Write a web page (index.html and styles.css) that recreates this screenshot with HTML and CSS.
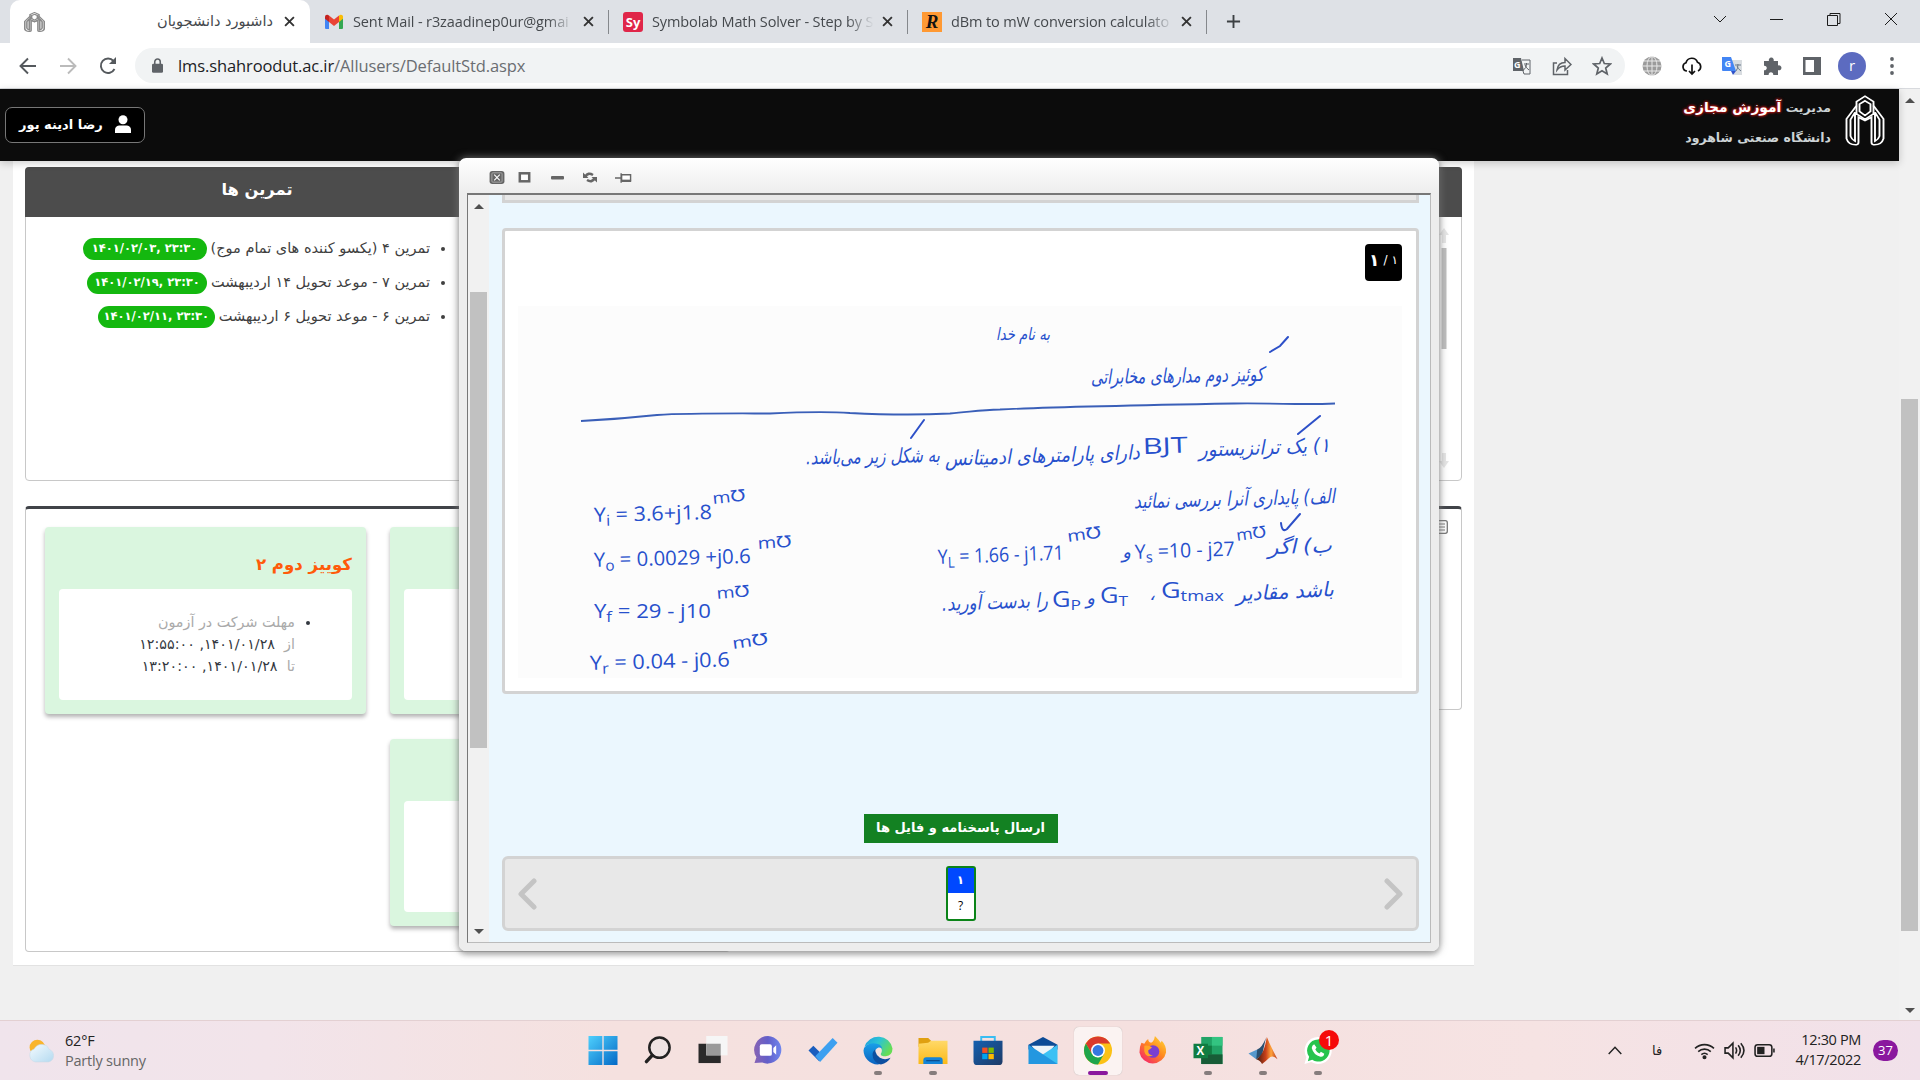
FILE: index.html
```html
<!DOCTYPE html>
<html lang="fa">
<head>
<meta charset="utf-8">
<title>داشبورد دانشجویان</title>
<link rel="stylesheet" href="styles.css">
</head>
<body>
<svg width="0" height="0" class="defs">
  <defs>
    <linearGradient id="gWin" x1="0" y1="0" x2="1" y2="1"><stop offset="0" stop-color="#4fd0fd"/><stop offset="1" stop-color="#0269c6"/></linearGradient>
    <linearGradient id="gEdge" x1="0" y1="0" x2="1" y2="0.5"><stop offset="0" stop-color="#1c9be0"/><stop offset=".5" stop-color="#2cc3d5"/><stop offset="1" stop-color="#66dd55"/></linearGradient>
    <linearGradient id="gEdge2" x1="0" y1="0" x2="0" y2="1"><stop offset="0" stop-color="#1a9fe8"/><stop offset="1" stop-color="#0b62c0"/></linearGradient>
    <linearGradient id="gChat" x1="0" y1="0" x2="1" y2="0"><stop offset="0" stop-color="#8763b4"/><stop offset=".5" stop-color="#635fc9"/><stop offset="1" stop-color="#6f86ee"/></linearGradient>
    <linearGradient id="gFold" x1="0" y1="0" x2="0" y2="1"><stop offset="0" stop-color="#ffd968"/><stop offset="1" stop-color="#fbb917"/></linearGradient>
    <linearGradient id="gStore" x1="0" y1="0" x2="1" y2="1"><stop offset="0" stop-color="#1560b0"/><stop offset="1" stop-color="#1d3a66"/></linearGradient>
    <linearGradient id="gFox" x1="1" y1="0" x2=".2" y2="1"><stop offset="0" stop-color="#ffe03a"/><stop offset=".5" stop-color="#ff8a1e"/><stop offset="1" stop-color="#f5246a"/></linearGradient>
    <linearGradient id="gMat" x1="0" y1="0" x2="1" y2="0"><stop offset="0" stop-color="#3c1a10"/><stop offset=".45" stop-color="#c9401a"/><stop offset=".7" stop-color="#ffa33b"/><stop offset="1" stop-color="#b5301b"/></linearGradient>
    <linearGradient id="gCloud" x1="0" y1="0" x2="1" y2="1"><stop offset="0" stop-color="#f4fbff"/><stop offset="1" stop-color="#b4daf0"/></linearGradient>
    <symbol id="uni" viewBox="0 0 40 62">
      <path d="M11.500 13V8L20 1.500 28.500 8v5L38.500 29v24q-2 8-10 7.500-2-.5-2-3V27L20 31l-6.500-4v30.500q0 2.500-2 3Q3.500 61 1.500 53V29z"/>
      <path d="M20 7l5.500 4v9L20 25l-5.500-5v-9zM11.500 13v10L20 29.500l8.500-6.500V13M10 21 5.500 30v20q1 4 4.500 6zM30 21l4.500 9v20q-1 4-4.500 6z"/>
    </symbol>
    <symbol id="cross" viewBox="0 0 10 10"><path d="M1 1 9 9M9 1 1 9"/></symbol>
  </defs>
</svg>
<div class="screen">
  <div class="tabs">
    <div class="tab active">
      <svg class="fav-uni" viewBox="0 0 40 62" preserveAspectRatio="none"><use href="#uni"/></svg>
      <span class="tab-title rtl" dir="rtl">داشبورد دانشجویان</span>
      <svg class="x"><use href="#cross"/></svg>
    </div>
    <div class="tab t2">
      <svg class="fav" viewBox="0 0 20 20"><path fill="#4285f4" d="M1 4v12q0 1 1 1h3V8z"/><path fill="#34a853" d="M19 4v12q0 1-1 1h-3V8z"/><path fill="#ea4335" d="M5 3.500l5 4 5-4V10l-5 4-5-4z"/><path fill="#c5221f" d="M1 5q0-2.500 2.500-2.200L5 3.500V10L1 6.800z"/><path fill="#fbbc04" d="M19 5q0-2.500-2.500-2.200L15 3.500V10l4-3.200z"/></svg>
      <span class="tab-title">Sent Mail - r3zaadinep0ur@gmai</span>
      <svg class="x"><use href="#cross"/></svg>
    </div>
    <div class="tab t3">
      <span class="fav sy">Sy</span>
      <span class="tab-title">Symbolab Math Solver - Step by S</span>
      <svg class="x"><use href="#cross"/></svg>
    </div>
    <div class="tab t4">
      <span class="fav rr">R</span>
      <span class="tab-title">dBm to mW conversion calculato</span>
      <svg class="x"><use href="#cross"/></svg>
    </div>
    <svg class="plus" viewBox="0 0 16 16"><path d="M8 1v14M1 8h14"/></svg>
    <div class="winbtns">
      <svg viewBox="0 0 14 14"><path d="M1 4l6 6 6-6"/></svg>
      <svg viewBox="0 0 14 14"><path d="M0 7.500h13"/></svg>
      <svg viewBox="0 0 14 14"><path d="M.5 3.500h10v10H.5zM3 3.500v-2h10v10h-2"/></svg>
      <svg viewBox="0 0 14 14"><path d="M1 1l12 12M13 1 1 13"/></svg>
    </div>
  </div>
  <div class="toolbar">
    <svg class="nav" viewBox="0 0 20 20"><path d="M18 10H3M10 2.500 2.500 10l7.500 7.500"/></svg>
    <svg class="nav dim" viewBox="0 0 20 20"><path d="M2 10h15M10 2.500l7.500 7.500-7.500 7.500"/></svg>
    <svg class="nav" viewBox="0 0 20 20"><path d="M16.500 13A7.200 7.200 0 1 1 15.500 5"/><path class="solid" d="M18 1v7h-7z"/></svg>
    <div class="omni">
      <svg class="lock" viewBox="0 0 12 16"><path fill="#5f6368" d="M1.500 6h9Q12 6 12 7.500v7Q12 16 10.500 16h-9Q0 16 0 14.500v-7Q0 6 1.500 6z"/><path fill="none" stroke="#5f6368" stroke-width="1.700" d="M3 6.500V4a3 3 0 0 1 6 0v2.500"/></svg>
      <span class="url">lms.shahroodut.ac.ir<i>/Allusers/DefaultStd.aspx</i></span>
      <div class="omni-icons">
        <svg viewBox="0 0 20 20"><path fill="#5f6368" d="M1 2h8l3 13H1z"/><path fill="none" stroke="#5f6368" d="M10 4h8v14h-6l-1-3M12 8h5M14.500 7v1q0 4-3 6M13 9q1 3 4 5"/><text x="2" y="12" font-size="9" font-weight="700" fill="#fff">G</text></svg>
        <svg viewBox="0 0 20 20"><path fill="none" stroke="#5f6368" stroke-width="1.500" d="M5 7H1.500v11.500h14V14M5 14q1-7.500 8-7.500V2.500l6 6-6 5.500v-4q-5 0-8 4z"/></svg>
        <svg viewBox="0 0 20 20"><path fill="none" stroke="#5f6368" stroke-width="1.700" d="M10 2l2.300 5.500 6 .5-4.600 4 1.500 6L10 14.800 4.800 18l1.500-6L1.700 8l6-.5z"/></svg>
      </div>
    </div>
    <div class="exts">
      <svg viewBox="0 0 20 20"><circle cx="10" cy="10" r="9.500" fill="#9b9b9b"/><path fill="none" stroke="#e8e8e8" d="M10 0v20M0 10h20M2 5h16M2 15h16"/><ellipse cx="10" cy="10" rx="5" ry="9.500" fill="none" stroke="#e8e8e8"/></svg>
      <svg viewBox="0 0 20 20"><path fill="none" stroke="#111" stroke-width="1.700" d="M5 15a4.200 4.200 0 0 1-1-8.200 6 6 0 0 1 11.500-.5A4.700 4.700 0 0 1 16 15M10 8.500V18M7 15l3 3 3-3"/></svg>
      <svg viewBox="0 0 20 20"><path fill="#d8dce0" d="M8 4h12v15h-8z"/><path fill="#4285f4" d="M0 1h9l5 14H1q-1 0-1-1z"/><path fill="#3052c8" d="M9 15h5l-3 4z"/><path stroke="#6b7a8c" fill="none" d="M13 9h6M16 8q0 5-2 7M15 10q1 3 4 5"/><text x="2.500" y="11" font-size="9" font-weight="700" fill="#fff">G</text></svg>
      <svg viewBox="0 0 20 20"><path fill="#5f6368" d="M2 5h5a2.500 2.500 0 1 1 4.600 0H16v4.500a2.500 2.500 0 1 1 0 4.600V19h-4.800a2.300 2.300 0 1 0-4.500 0H2v-4.800a2.300 2.300 0 1 0 0-4.500z"/></svg>
      <svg viewBox="0 0 20 20"><path fill="#5f6368" fill-rule="evenodd" d="M1 1h18v18H1zM3.500 4v12H12V4z"/></svg>
      <span class="avatar">r</span>
      <svg viewBox="0 0 20 20"><g fill="#5f6368"><circle cx="10" cy="3" r="1.900"/><circle cx="10" cy="10" r="1.900"/><circle cx="10" cy="17" r="1.900"/></g></svg>
    </div>
  </div>
  <div class="view">
    <div class="page">
      <div class="header">
        <div class="user"><span dir="rtl">رضا ادینه پور</span>
          <svg viewBox="0 0 16 18"><circle cx="8" cy="4.800" r="4.500"/><path d="M0 18v-3q0-4 4-4.500h8q4 .5 4 4.500v3z"/></svg></div>
        <div class="brand">
          <div class="brand-text" dir="rtl"><div>مدیریت <b>آموزش مجازی</b></div><div>دانشگاه صنعتی شاهرود</div></div>
          <svg class="logo" viewBox="0 0 40 62" preserveAspectRatio="none"><use href="#uni"/></svg>
        </div>
      </div>
      <div class="main">
        <div class="row top">
          <div class="panel tasks">
            <div class="panel-head" dir="rtl">تمرین ها</div>
            <ul dir="rtl">
              <li><span>تمرین ۴ (یکسو کننده های تمام موج)</span><bdi class="pill p1" dir="ltr">۱۴۰۱/۰۲/۰۳, ۲۳:۳۰</bdi></li>
              <li><span>تمرین ۷ - موعد تحویل ۱۴ اردیبهشت</span><bdi class="pill p2" dir="ltr">۱۴۰۱/۰۲/۱۹, ۲۳:۳۰</bdi></li>
              <li><span>تمرین ۶ - موعد تحویل ۶ اردیبهشت</span><bdi class="pill p3" dir="ltr">۱۴۰۱/۰۲/۱۱, ۲۳:۳۰</bdi></li>
            </ul>
          </div>
          <div class="panel side">
            <div class="panel-head"></div>
            <svg class="track" viewBox="0 0 10 240"><path fill="#e6e6e6" d="M5 0l5 7H7v8H3V7H0zM5 240l5-7H7v-8H3v8H0z"/><rect x="2.500" y="20" width="5" height="101" fill="#bdbdbd"/></svg>
          </div>
        </div>
        <div class="row bottom">
          <div class="panel quizzes">
            <div class="quiz">
              <h3 dir="rtl">کوییز دوم ۲</h3>
              <div class="info" dir="rtl"><ul><li><span>مهلت شرکت در آزمون</span><br><span>از</span>&nbsp; ۱۴۰۱/۰۱/۲۸, ۱۲:۵۵:۰۰<br><span>تا</span>&nbsp; ۱۴۰۱/۰۱/۲۸, ۱۳:۲۰:۰۰</li></ul></div>
            </div>
            <div class="quiz"><h3></h3><div class="info"></div></div>
            <div class="quiz third"><h3></h3><div class="info"></div></div>
          </div>
          <div class="panel notes">
            <svg viewBox="0 0 14 14"><rect x=".7" y=".7" width="12.600" height="12.600" rx="2" fill="none" stroke="#777" stroke-width="1.300"/><path stroke="#777" d="M3 4h8M3 7h8M3 10h8"/></svg>
          </div>
        </div>
      </div>
    </div>
    <div class="vscroll"><i class="up"></i><i class="thumb"></i><i class="down"></i></div>
  </div>
  <div class="taskbar">
    <div class="weather">
      <svg viewBox="0 0 28 28"><circle cx="10" cy="11" r="7.500" fill="#f9b52c"/><path fill="url(#gCloud)" stroke="#c9dce8" stroke-width=".6" d="M8 25a6.500 6.500 0 0 1-1-12.500A8 8 0 0 1 21.500 13 6.300 6.300 0 0 1 21 25z"/></svg>
      <div><p class="temp">62°F</p><p class="sky">Partly sunny</p></div>
    </div>
    <div class="apps">
      <span><svg viewBox="0 0 30 30"><path fill="url(#gWin)" d="M0 0h14.300v14.300H0zM15.700 0H30v14.300H15.700zM0 15.700h14.300V30H0zM15.700 15.700H30V30H15.700z"/></svg></span>
      <span><svg viewBox="0 0 30 30"><circle cx="16.500" cy="12" r="10.500" fill="#efe4e4" stroke="#222" stroke-width="2.600"/><path stroke="#222" stroke-width="3.500" stroke-linecap="round" d="M9 20l-6 6.500"/></svg></span>
      <span><svg viewBox="0 0 30 30"><path fill="#2a2a2a" d="M0 8h23v20H0z"/><path fill="#f6f6f6" d="M8 0h22v20H8z"/><path fill="#9a9a9a" d="M8 8h15v12H8z"/></svg></span>
      <span><svg viewBox="0 0 30 30"><path fill="url(#gChat)" d="M15 0a14.300 14.300 0 1 1-6 27.500L1 28l2-6A14.300 14.300 0 0 1 15 0z"/><rect x="6.500" y="8.500" width="12.500" height="12" rx="2" fill="#fff"/><path fill="#fff" d="M20.500 12.500l3-3v10l-3-3z"/></svg></span>
      <span><svg viewBox="0 0 30 30"><path fill="#1a5dbe" d="M0 15l5-5 10 10-4 6z"/><path fill="#3da0f0" d="M7 21 25 2l5 5-18 20z"/></svg></span>
      <span class="run"><svg viewBox="0 0 30 30"><path fill="url(#gEdge)" d="M1 11A15 15 0 0 1 30 13q0 7-7 8-6 0-5-3 1-1 1-3 0-6-8-6.500Q4 8 1 11z"/><path fill="url(#gEdge2)" d="M0 15q1-7 10-7.500 9 0 9.500 6.500-1-2.500-4-2-4 1.500-4 6 1 9 9 9.500-3 2-6 2A15 15 0 0 1 0 15z"/><path fill="#0d4fa0" d="M12 14q-4 3-2 9 2 5 8 6.500Q25 28 28 22.500q-6 3-11 0-4-3-4.500-6z"/></svg></span>
      <span class="run"><svg viewBox="0 0 30 30"><path fill="#e0a010" d="M0 2h10l3 3v6H0z"/><path fill="url(#gFold)" d="M0 8l10-1 3-2h17v24H0z"/><path fill="#1484d8" d="M5 29v-4q0-3 3-3h14q3 0 3 3v4z"/><path stroke="#0c4f90" stroke-width="1.300" d="M8 25.500h14"/></svg></span>
      <span><svg viewBox="0 0 30 30"><path fill="none" stroke="#39bdf2" stroke-width="2" d="M8 6V1h14v5"/><path fill="url(#gStore)" d="M0 5h30v21q0 4-4 4H4q-4 0-4-4z"/><path fill="#f25022" d="M9 12h5.500v5.500H9z"/><path fill="#7fba00" d="M15.500 12H21v5.500h-5.500z"/><path fill="#00a4ef" d="M9 18.500h5.500V24H9z"/><path fill="#ffb900" d="M15.500 18.500H21V24h-5.500z"/></svg></span>
      <span><svg viewBox="0 0 30 30"><path fill="#0c4b96" d="M0 9 15 1l15 8v5H0z"/><path fill="#eef4f8" d="M3 10h24l-7 8H10z"/><path fill="#3cc1f4" d="M30 9v20H0z"/><path fill="#2397e0" d="M0 9l30 20H0z"/></svg></span>
      <span class="on"><svg viewBox="0 0 30 30"><circle cx="15" cy="15" r="14.500" fill="#fbc116"/><path fill="#da3a2c" d="M2.400 7.800A14.500 14.500 0 0 1 27.600 7.800H15L8.800 18.600z"/><path fill="#1ea54c" d="M2.400 7.800 8.800 18.600 15 22.200l6.200-3.600-6.200 10.900A14.500 14.500 0 0 1 2.400 7.800z"/><circle cx="15" cy="15" r="7.200" fill="#fff"/><circle cx="15" cy="15" r="5.600" fill="#3578e0"/></svg></span>
      <span><svg viewBox="0 0 30 30"><path fill="url(#gFox)" d="M3 7l3 1q2-4 4-5 0 3 3 4 3-1 4-7 4 4 6 7l1-2q5 5 4.500 12A14 14 0 0 1 1 17Q1 11 3 7z"/><circle cx="15" cy="16" r="6.500" fill="#7a3fd0"/><path fill="#ffa526" d="M6 10q5-1 8 2l-4 3q0 5 5 5-7 3-9-4z"/></svg></span>
      <span class="run"><svg viewBox="0 0 30 30"><path fill="#21a366" d="M8 1h22v28H8z"/><path fill="#33c481" d="M19 1h11v9H19z"/><path fill="#107c41" d="M8 10h11v9H8z"/><path fill="#185c37" d="M8 19h22v10H8z"/><path fill="#107c41" d="M0 8h15v15H0z"/><text x="3" y="20" font-size="12" font-weight="700" fill="#fff">X</text></svg></span>
      <span class="run"><svg viewBox="0 0 30 30"><path fill="#5698cc" d="M0 18l9-4 4 5-5 5z"/><path fill="#2a4f70" d="M9 14q5-2 9-12l-4 18-6 4z"/><path fill="url(#gMat)" d="M8 24Q16 20 19 1q4 10 11 23-5-5-9-1-3 3-7 6-2-4-6-5z"/></svg></span>
      <span class="run"><svg viewBox="0 0 30 30"><path fill="#fff" d="M15 1a14 14 0 1 1-7 26l-7 2 2-7A14 14 0 0 1 15 1z"/><path fill="#27c44e" d="M15 3.500a11.500 11.500 0 1 1-6 21L4.500 26l1.300-4.500A11.500 11.500 0 0 1 15 3.500z"/><path fill="#fff" d="M11 8.500l2.500 3.500-1.300 2q1.500 3 4.300 4l1.500-1.600 3.500 2q-.5 3.500-4 3.100-7-1.500-9-9 .2-3 2.500-4z"/></svg><b>1</b></span>
    </div>
    <div class="tray">
      <svg class="caret" viewBox="0 0 16 10"><path d="M1 9l7-7.500L15 9"/></svg>
      <span class="lang">فا</span>
      <svg class="ti" viewBox="0 0 20 18"><path d="M1 7a13 13 0 0 1 18 0M4 10a9 9 0 0 1 12 0M7 13a4.500 4.500 0 0 1 6 0"/><circle cx="10" cy="15.500" r="1.200" fill="#222"/></svg>
      <svg class="ti" viewBox="0 0 20 18"><path d="M1 6.500v5h3L8.500 16V2L4 6.500zM11 6q2 3 0 6M13.500 4q4 5 0 10M16 2q6 7 0 14"/></svg>
      <svg class="ti" viewBox="0 0 20 18"><rect x="1" y="3.500" width="16" height="11" rx="2.500"/><rect x="3" y="5.500" width="7" height="7" fill="#222" stroke="none"/><path d="M19 7v4"/></svg>
      <div class="clock"><p>12:30 PM</p><p>4/17/2022</p></div>
      <span class="count">37</span>
    </div>
  </div>

  <div class="dialog">
    <div class="dlg-bar">
      <svg viewBox="0 0 16 14"><rect width="16" height="14" rx="3" fill="#666"/><rect x="2.500" y="2" width="11" height="10" rx="1" fill="none" stroke="#aaa"/><path stroke="#fff" stroke-width="1.200" d="M5 4l6 6M11 4l-6 6"/></svg>
      <svg class="sq" viewBox="0 0 12 11"><rect x="1.300" y="1.300" width="9.400" height="8" fill="#fff" stroke="#666" stroke-width="2.500"/></svg>
      <svg class="mn" viewBox="0 0 13 4"><rect width="13" height="3.500" rx="1" fill="#666"/></svg>
      <svg class="rf" viewBox="0 0 14 12"><path fill="none" stroke="#666" stroke-width="2.600" d="M2.500 5Q5 .5 10 3.500M11.500 7Q9 11.500 4 8.500"/><path fill="#666" d="M0 1v5.500h5.500zM14 11V5.500H8.500z"/></svg>
      <svg class="pn" viewBox="0 0 18 12"><path fill="#fff" stroke="#666" stroke-width="1.500" d="M0 6h6M6.500 1v10M7 2.500h9.500V9H7z"/><path stroke="#666" stroke-width="2.500" d="M7 9h10"/></svg>
    </div>
    <div class="frame">
      <div class="fscroll"><i class="up"></i><i class="thumb"></i><i class="down"></i></div>
      <div class="fbody">
        <div class="stub"></div>
        <div class="question">
          <div class="num"><b>۱</b><span>/</span><span>۱</span></div>
          <svg class="sheet" viewBox="518 306 884 372">
            <path class="ink" d="M581 421Q620 419 657 415C690 413 740 413.500 770 413.500 800 412 830 411.500 850 413 880 414.500 920 415 950 413.500 970 412 980 410 1000 409.500 1050 407 1150 405 1234 403.500 1280 403 1300 405 1335 403.500"/>
            <g class="fa">
              <text x="1050" y="340" font-size="17" textLength="54" lengthAdjust="spacingAndGlyphs">به نام خدا</text>
              <text x="1264" y="381" font-size="20" textLength="173" lengthAdjust="spacingAndGlyphs" transform="rotate(-1 1264 381)">کوئیز دوم مدارهای مخابراتی</text>
              <text x="1330" y="452" font-size="20" textLength="131" lengthAdjust="spacingAndGlyphs" transform="rotate(-2 1330 452)">۱) یک ترانزیستور</text>
              <text x="1140" y="459" font-size="20" textLength="195" lengthAdjust="spacingAndGlyphs" transform="rotate(-2 1140 459)">دارای پارامترهای ادمیتانس</text>
              <text x="940" y="462" font-size="20" textLength="134" lengthAdjust="spacingAndGlyphs" transform="rotate(-1 940 462)">به شکل زیر می‌باشد.</text>
              <text x="1335" y="503" font-size="20" textLength="201" lengthAdjust="spacingAndGlyphs" transform="rotate(-1.500 1335 503)">الف) پایداری آنرا بررسی نمائید</text>
              <text x="1332" y="552" font-size="20" textLength="64" lengthAdjust="spacingAndGlyphs" transform="rotate(-2 1332 552)">ب) اگر</text>
              <text x="1131" y="558" font-size="18">و</text>
              <text x="1334" y="596" font-size="20" textLength="98" lengthAdjust="spacingAndGlyphs" transform="rotate(-3 1334 596)">باشد مقادیر</text>
              <text x="1155" y="600" font-size="18">،</text>
              <text x="1095" y="604" font-size="18">و</text>
              <text x="1048" y="607" font-size="20" textLength="106" lengthAdjust="spacingAndGlyphs" transform="rotate(-2 1048 607)">را بدست آورید.</text>
              <path class="stroke" d="M1270 352l10-6 8-9M1298 434l22-18M911 438l13-18M1281 523q1 10 6 6l13-15"/>
            </g>
            <g class="en">
              <text x="1143" y="454" font-size="22" textLength="45" lengthAdjust="spacingAndGlyphs" transform="rotate(-2 1143 454)">BJT</text>
              <text x="1135" y="559" font-size="20" textLength="100" lengthAdjust="spacingAndGlyphs" transform="rotate(-2 1135 559)">Y<tspan class="sub" dy="4">s</tspan><tspan dy="-4"> =10 - j27</tspan></text>
              <text x="1237" y="541" font-size="16" textLength="30" lengthAdjust="spacingAndGlyphs" transform="rotate(-8 1237 541)">m℧</text>
              <text x="938" y="564" font-size="20" textLength="126" lengthAdjust="spacingAndGlyphs" transform="rotate(-2 938 564)">Y<tspan class="sub" dy="4">L</tspan><tspan dy="-4"> = 1.66 - j1.71</tspan></text>
              <text x="1068" y="542" font-size="16" textLength="34" lengthAdjust="spacingAndGlyphs" transform="rotate(-8 1068 542)">m℧</text>
              <text x="1161" y="598" font-size="22" textLength="63" lengthAdjust="spacingAndGlyphs">G<tspan class="sub" dy="3">tmax</tspan></text>
              <text x="1100" y="603" font-size="22" textLength="28" lengthAdjust="spacingAndGlyphs">G<tspan class="sub" dy="3">T</tspan></text>
              <text x="1052" y="607" font-size="22" textLength="29" lengthAdjust="spacingAndGlyphs">G<tspan class="sub" dy="3">P</tspan></text>
              <text x="594" y="522" font-size="20" textLength="118" lengthAdjust="spacingAndGlyphs" transform="rotate(-1.500 594 522)">Y<tspan class="sub" dy="4">i</tspan><tspan dy="-4"> = 3.6+j1.8</tspan></text>
              <text x="713" y="504" font-size="16" textLength="33" lengthAdjust="spacingAndGlyphs" transform="rotate(-6 713 504)">m℧</text>
              <text x="594" y="567" font-size="20" textLength="157" lengthAdjust="spacingAndGlyphs" transform="rotate(-1.500 594 567)">Y<tspan class="sub" dy="4">o</tspan><tspan dy="-4"> = 0.0029 +j0.6</tspan></text>
              <text x="758" y="549" font-size="16" textLength="34" lengthAdjust="spacingAndGlyphs" transform="rotate(-4 758 549)">m℧</text>
              <text x="594" y="618" font-size="20" textLength="117" lengthAdjust="spacingAndGlyphs">Y<tspan class="sub" dy="4">f</tspan><tspan dy="-4"> = 29 - j10</tspan></text>
              <text x="717" y="599" font-size="16" textLength="33" lengthAdjust="spacingAndGlyphs" transform="rotate(-5 717 599)">m℧</text>
              <text x="590" y="670" font-size="20" textLength="140" lengthAdjust="spacingAndGlyphs" transform="rotate(-1.500 590 670)">Y<tspan class="sub" dy="4">r</tspan><tspan dy="-4"> = 0.04 - j0.6</tspan></text>
              <text x="733" y="649" font-size="16" textLength="36" lengthAdjust="spacingAndGlyphs" transform="rotate(-8 733 649)">m℧</text>
            </g>
          </svg>
        </div>
        <button class="send" dir="rtl">ارسال پاسخنامه و فایل ها</button>
        <div class="pager">
          <svg viewBox="0 0 20 32"><path d="M17 3 4 16l13 13"/></svg>
          <div class="chip"><b>۱</b><span>?</span></div>
          <svg viewBox="0 0 20 32"><path d="M3 3l13 13L3 29"/></svg>
        </div>
      </div>
    </div>
  </div>
</div>
</body>
</html>
```
FILE: styles.css
```css
* { box-sizing: border-box; }
body { margin: 0; font-family: "DejaVu Sans", sans-serif; overflow: hidden; }
p, h3, ul { margin: 0; padding: 0; font-weight: inherit; }
.defs { position: absolute; }
.screen { width: 1920px; height: 1080px; display: flex; flex-direction: column; position: relative; overflow: hidden; }

/* browser chrome */
.tabs { height: 43px; background: #dee1e6; display: flex; align-items: center; padding-left: 10px; font: 14.500px "Open Sans", sans-serif; color: #45494d; }
.tab { height: 43px; display: flex; align-items: center; flex: none; }
.tab.active { width: 300px; background: #fff; border-radius: 10px 10px 0 0; padding: 0 15px 0 14px; }
.tab-title { flex: 1; white-space: nowrap; overflow: hidden; letter-spacing: -.12px; padding-bottom: 1px; -webkit-mask-image: linear-gradient(90deg, #000 88%, transparent); mask-image: linear-gradient(90deg, #000 88%, transparent); }
.tab-title.rtl { font: 14.500px "DejaVu Sans", sans-serif; letter-spacing: 0; margin-right: 11px; -webkit-mask-image: none; mask-image: none; }
.t2, .t3, .t4 { width: 299px; padding: 0 14px; border-right: 1px solid #85888c; height: 24px; }
.fav { width: 20px; height: 20px; flex: none; margin-right: 9px; }
.sy { background: #e02649; color: #fff; border-radius: 3px; font: bold 13px/20px "Open Sans", sans-serif; text-align: center; }
.rr { background: #ff9933; color: #111; font: italic bold 19px/20px "Liberation Serif", serif; text-align: center; }
.fav-uni, .logo { fill: none; stroke: #8a8a8a; stroke-width: 3; flex: none; }
.fav-uni { width: 21px; height: 20px; }
.x { width: 11px; height: 11px; stroke: #333; stroke-width: 1.700; flex: none; margin-left: 9px; }
.tab.active .x { margin-left: 0; }
.t3 .x, .t4 .x { margin-left: 8px; }
.plus { width: 15px; height: 15px; stroke: #3c4043; stroke-width: 2; margin-left: 19px; }
.winbtns { display: flex; gap: 43px; margin-left: auto; padding: 0 22px 6px 0; }
.winbtns svg { width: 14px; height: 14px; fill: none; stroke: #1c1c1c; }
.toolbar { height: 46px; background: #fff; border-bottom: 1px solid #d8dade; display: flex; align-items: center; padding: 0 18px; flex: none; }
.nav { width: 20px; height: 20px; fill: none; stroke: #55595d; stroke-width: 1.900; margin-right: 20px; flex: none; }
.nav + .nav + .nav { margin-right: 17px; }
.nav.dim { stroke: #bbb; }
.nav .solid { fill: #55595d; stroke: none; }
.omni { width: 1490px; height: 35px; border-radius: 18px; background: #f1f3f4; display: flex; align-items: center; padding: 0 13px 0 17px; flex: none; }
.lock { width: 11px; height: 15px; }
.url { margin-left: 15px; font: 16.500px "Open Sans", sans-serif; letter-spacing: -.11px; color: #202124; padding-bottom: 1px; }
.url i { font-style: normal; color: #6a6d71; }
.omni-icons { margin-left: auto; display: flex; gap: 20px; }
.omni-icons svg, .exts svg { width: 20px; height: 20px; font-family: "Open Sans", sans-serif; }
.exts { display: flex; align-items: center; gap: 20px; margin-left: 17px; }
.avatar { width: 28px; height: 28px; border-radius: 50%; background: #5c6bc0; color: #fff; font: 15px/26px "Open Sans", sans-serif; text-align: center; margin: 0 -4px; }

/* site */
.view { height: 931px; flex: none; display: flex; background: #f0f0f0; }
.page { width: 1899px; }
.header { height: 72px; background: #0c0c0c; display: flex; justify-content: space-between; align-items: flex-start; padding: 18px 14px 0 5px; box-shadow: 0 2px 8px rgba(0,0,0,.2); position: relative; }
.user { width: 140px; height: 36px; border: 1px solid #777; border-radius: 7px; background: #000; color: #fff; display: flex; align-items: center; justify-content: space-between; padding: 0 13px 2px 13px; font: bold 13px "DejaVu Sans", sans-serif; white-space: nowrap; }
.user svg { width: 16px; height: 18px; fill: #fff; }
.brand { display: flex; margin-top: -12px; gap: 14px; }
.brand-text { color: #ccd3d5; font-size: 12.500px; font-weight: bold; line-height: 30px; white-space: nowrap; margin-top: -3px; }
.brand-text b { color: #fff; font-size: 13.800px; text-shadow: 0 0 3px #f22, 0 0 3px #c00; }
.logo { width: 40px; height: 51px; stroke: #fff; stroke-width: 1.900; }
.main { width: 1461px; height: 805px; margin-left: 13px; background: #fff; border-bottom: 1px solid #e2e2e2; padding: 6px 12px 0; display: flex; flex-direction: column; gap: 25px; }
.row { display: flex; justify-content: space-between; align-items: flex-start; }
.panel { border: 1px solid #c8c8c8; border-radius: 4px; }
.top .panel { height: 314px; }
.panel-head { background: #4c4c4c; color: #fff; height: 50px; margin: -1px -1px 0; border-radius: 4px 4px 0 0; font-weight: bold; font-size: 16.300px; line-height: 46px; text-align: center; }
.tasks { width: 464px; }
.side { width: 700px; }
.tasks ul { padding: 14px 58px 0 0; font-size: 14.500px; color: #404040; }
.tasks li { height: 34px; line-height: 34px; white-space: nowrap; }
.pill { display: inline-block; height: 22px; border-radius: 11px; background: #14b80f; color: #fff; font: bold 11.500px/20px "DejaVu Sans", sans-serif; text-align: center; margin-right: 4px; vertical-align: middle; letter-spacing: -.2px; }
.p1 { width: 124px; } .p2 { width: 120px; } .p3 { width: 117px; }
.track { display: block; width: 10px; height: 240px; margin: 11px 12px 0 auto; }
.bottom .panel { border-top: 3px solid #404348; }
.quizzes { width: 705px; height: 446px; padding: 18px 19px; display: grid; grid-template-columns: 321px 321px; grid-template-rows: 187px 187px; gap: 25px 24px; }
.quiz { background: #daf6df; border-radius: 4px; padding: 25px 14px 14px 14px; box-shadow: 0 3px 4px rgba(0,0,0,.3); }
.third { grid-column: 2; }
.quiz h3 { height: 37px; line-height: 25px; color: #ff5b0a; font-weight: bold; font-size: 16.600px; }
.info { height: 111px; background: #fff; border-radius: 4px; padding: 22px 57px 0 0; font-size: 14.300px; line-height: 22px; color: #333840; white-space: nowrap; }
.info span { color: #aaa; }
.notes { width: 700px; height: 204px; }
.notes svg { display: block; width: 14px; height: 14px; margin: 11px 13px 0 auto; }
.vscroll, .fscroll { display: flex; flex-direction: column; align-items: center; background: #f1f1f1; flex: none; }
.vscroll { width: 21px; padding-top: 9px; }
.up { border: 5px solid transparent; border-top: 0; border-bottom: 5px solid #505050; }
.down { border: 5px solid transparent; border-bottom: 0; border-top: 5px solid #505050; }
.thumb { width: 17px; background: #c1c1c1; }
.vscroll .thumb { height: 532px; margin: 296px 0 77px; }

/* taskbar */
.taskbar { height: 60px; border-top: 1px solid #e3d0d2; background: linear-gradient(90deg, #f0e4ec, #f2e4ea 14%, #f5e1df 32%, #f5e0df 60%, #f6e3e3 80%, #f1e1ea); position: relative; font-family: "Open Sans", sans-serif; color: #222; display: flex; align-items: center; }
.weather { width: 586px; padding-left: 27px; display: flex; gap: 9px; align-items: center; font-size: 14.500px; line-height: 20px; letter-spacing: -.22px; }
.weather svg { width: 29px; height: 29px; }
.sky { color: #666; }
.apps { display: flex; gap: 7px; margin-left: -7px; }
.apps span { width: 48px; height: 48px; display: flex; align-items: center; justify-content: center; position: relative; border-radius: 5px; }
.apps svg { width: 30px; height: 29px; }
.apps .on { background: #fbf3f2; box-shadow: 0 0 1px #aaa; }
.apps .on::after, .apps .run::after { content: ""; position: absolute; bottom: 0; height: 4px; border-radius: 2px; background: #8a189e; width: 20px; left: 14px; }
.apps .run::after { width: 8px; left: 20px; background: #867d7d; }
.apps b { position: absolute; left: 25px; top: 3px; width: 20px; height: 20px; border-radius: 50%; background: #f50a0a; color: #fff; font: 15px/20px "Open Sans", sans-serif; text-align: center; }
.tray { margin-left: auto; display: flex; align-items: center; padding-right: 22px; }
.caret { width: 16px; height: 9px; fill: none; stroke: #222; stroke-width: 1.600; }
.lang { font: 13px "DejaVu Sans", sans-serif; width: 14px; margin: 0 28px 0 29px; }
.ti { width: 21px; height: 19px; margin-right: 9px; fill: none; stroke: #222; stroke-width: 1.500; }
.clock { width: 77px; text-align: right; font-size: 14.500px; line-height: 20px; letter-spacing: -.35px; white-space: nowrap; margin-top: -1px; }
.count { width: 25px; height: 21px; border-radius: 11px; background: #8a189e; color: #fff; font-size: 13px; line-height: 21px; text-align: center; margin-left: 12px; }

/* exam dialog */
.dialog { position: absolute; left: 459px; top: 158px; width: 980px; height: 793px; border-radius: 7px; background: linear-gradient(#fff, #ededed 36px); box-shadow: 0 0 8px rgba(130,130,130,.9), 0 4px 5px rgba(0,0,0,.2); padding: 0 8px; }
.dlg-bar { height: 35px; display: flex; align-items: center; padding: 4px 0 0 22px; }
.dlg-bar svg { width: 16px; height: 13px; }
.dlg-bar .sq { width: 13px; height: 11px; margin-left: 13px; }
.dlg-bar .mn { width: 13px; height: 4px; margin-left: 20px; }
.dlg-bar .rf { width: 14px; height: 13px; margin-left: 19px; }
.dlg-bar .pn { width: 17px; height: 12px; margin-left: 18px; }
.frame { height: 750px; border: 1px solid #bbb; border-left-color: #777; border-top: 2px solid #777; display: flex; }
.fscroll { width: 21px; padding-top: 9px; }
.fscroll .thumb { height: 456px; margin: 83px 0 181px; }
.fbody { flex: 1; background: #ebf7fe; padding: 0 11px 0 13px; display: flex; flex-direction: column; align-items: center; }
.stub { width: 917px; height: 8px; background: #e8e8e8; border: 3px solid #d3d3d3; border-top: 0; flex: none; }
.question { width: 917px; height: 466px; margin-top: 25px; background: #fff; border: 3px solid #d3d3d3; border-radius: 4px; padding: 13px 14px 13px 13px; display: flex; flex-direction: column; align-items: flex-end; flex: none; }
.num { width: 37px; height: 37px; border-radius: 4px; background: #000; color: #fff; display: flex; justify-content: center; align-items: center; gap: 4px; padding-bottom: 5px; font-size: 12px; }
.num b { font-size: 17px; }
.sheet { width: 884px; height: 372px; margin-top: 25px; background: #fcfcfc; flex: none; }
.ink { fill: none; stroke: #3a5fb8; stroke-width: 1.800; }
.stroke { fill: none; stroke: #2d50c8; stroke-width: 2; stroke-linecap: round; }
.sheet text { fill: #2750cc; }
.fa text { direction: rtl; font-family: "DejaVu Sans", sans-serif; font-style: italic; }
.en text { font-family: "Open Sans", "DejaVu Sans", sans-serif; }
.sub { font-size: 15px; }
.send { width: 194px; height: 29px; margin-top: 120px; border: 0; padding: 0 0 3px; background: #138122; color: #fff; font: bold 13px "DejaVu Sans", sans-serif; white-space: nowrap; flex: none; }
.pager { width: 917px; height: 75px; margin-top: 13px; background: #e8e8e8; border: 3px solid #d3d3d3; border-radius: 6px; display: flex; align-items: center; justify-content: space-between; padding: 0 12px; flex: none; }
.pager svg { width: 20px; height: 32px; fill: none; stroke: #c4c4c4; stroke-width: 5; stroke-linecap: round; stroke-linejoin: round; }
.chip { width: 30px; height: 55px; border: 2px solid #0b8418; border-radius: 3px; background: #fff; display: flex; flex-direction: column; text-align: center; font-size: 12px; line-height: 25px; }
.chip b { background: #0048ff; color: #fff; height: 25px; }
.chip span { font-family: "Open Sans", sans-serif; }
```
